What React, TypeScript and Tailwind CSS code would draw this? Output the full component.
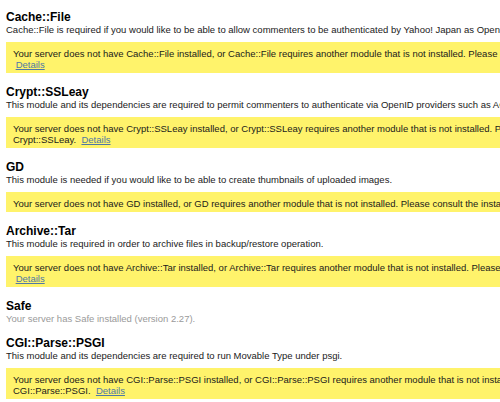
import React from 'react';

type Module = {
  name: string;
  desc: string;
  installed?: boolean;
  lines?: string[];
};

const MODULES: Module[] = [
  {
    name: 'Cache::File',
    desc: 'Cache::File is required if you would like to be able to allow commenters to be authenticated by Yahoo! Japan as OpenID.',
    lines: [
      'Your server does not have Cache::File installed, or Cache::File requires another module that is not installed. Please consult the installation instructions for Cache::File.',
      '',
    ],
  },
  {
    name: 'Crypt::SSLeay',
    desc: 'This module and its dependencies are required to permit commenters to authenticate via OpenID providers such as AOL and Yahoo! that use SSL.',
    lines: [
      'Your server does not have Crypt::SSLeay installed, or Crypt::SSLeay requires another module that is not installed. Please consult the installation instructions for',
      'Crypt::SSLeay.',
    ],
  },
  {
    name: 'GD',
    desc: 'This module is needed if you would like to be able to create thumbnails of uploaded images.',
    lines: [
      'Your server does not have GD installed, or GD requires another module that is not installed. Please consult the installation instructions for GD.',
    ],
  },
  {
    name: 'Archive::Tar',
    desc: 'This module is required in order to archive files in backup/restore operation.',
    lines: [
      'Your server does not have Archive::Tar installed, or Archive::Tar requires another module that is not installed. Please consult the installation instructions for Archive::Tar.',
      '',
    ],
  },
  {
    name: 'Safe',
    desc: 'Your server has Safe installed (version 2.27).',
    installed: true,
  },
  {
    name: 'CGI::Parse::PSGI',
    desc: 'This module and its dependencies are required to run Movable Type under psgi.',
    lines: [
      'Your server does not have CGI::Parse::PSGI installed, or CGI::Parse::PSGI requires another module that is not installed. Please consult the installation instructions for',
      'CGI::Parse::PSGI.',
    ],
  },
];

const Details = () => (
  <a href="#" className="text-[#4f78a6] underline">
    Details
  </a>
);

const App: React.FC = () => {
  return (
    <div
      className="w-[500px] h-[402px] overflow-hidden bg-white text-[#1a1a1a] pl-[6px] pt-[10px]"
      style={{ fontFamily: '"Liberation Sans", Arial, sans-serif' }}
    >
      {MODULES.map((m) => (
        <div key={m.name} className="mb-[12px] w-[900px]">
          <h3 className="text-[12px] leading-[14px] font-bold text-black">{m.name}</h3>
          <p
            className={`text-[9.5px] leading-[11px] whitespace-nowrap ${
              m.installed ? 'text-[#9a9a9a]' : 'text-[#1a1a1a]'
            }`}
          >
            {m.desc}
          </p>
          {m.lines && (
            <div className="mt-[7px] bg-[#fff36b] pt-[6px] pb-[3px] px-[7px] text-[9.5px] leading-[11px] whitespace-nowrap">
              {m.lines.map((line, i) => (
                <div key={i}>
                  {line}
                  {i === m.lines!.length - 1 && (
                    <>
                      {line ? '\u00a0\u00a0' : '\u00a0'}
                      <Details />
                    </>
                  )}
                </div>
              ))}
            </div>
          )}
        </div>
      ))}
    </div>
  );
};

export default App;
